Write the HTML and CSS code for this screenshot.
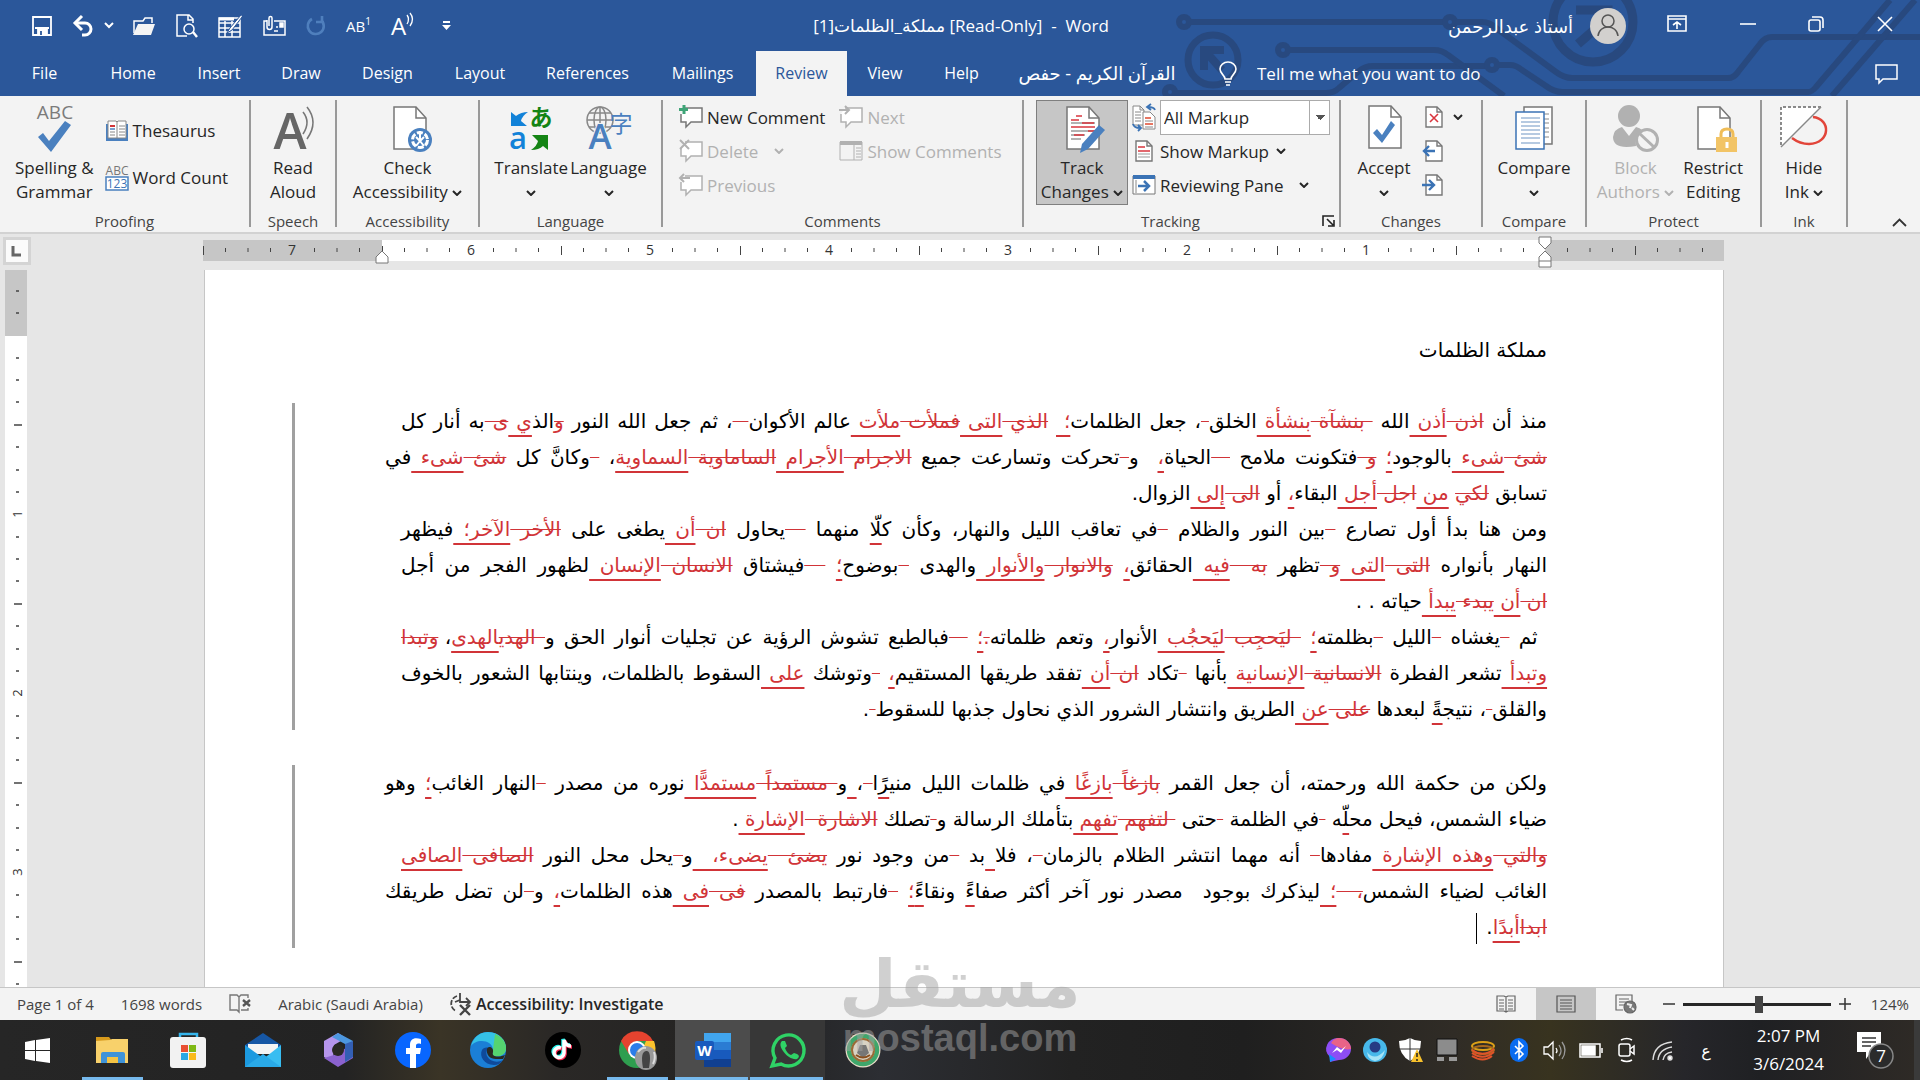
FILE: index.html
```
<!DOCTYPE html>
<html lang="en">
<head>
<meta charset="utf-8">
<title>Word</title>
<link rel="stylesheet" href="styles.css">
</head>
<body>
<svg class="defs" aria-hidden="true">
	<symbol id="chev" viewBox="0 0 10 6"><path d="M1 1l4 4 4-4" fill="none" stroke="currentColor" stroke-width="2"/></symbol>
	<symbol id="doc" viewBox="0 0 34 44"><path d="M1 1h22l10 11v31H1z" fill="#fff" stroke="#777" stroke-width="1.5"/><path d="M23 1v11h10" fill="none" stroke="#777" stroke-width="1.5"/></symbol>
	<symbol id="smalldoc" viewBox="0 0 18 22"><path d="M1 1h11l5 5v15H1z" fill="#fff" stroke="#777" stroke-width="1.4"/><path d="M12 1v5h5" fill="none" stroke="#777" stroke-width="1.4"/></symbol>
	<symbol id="bubble" viewBox="0 0 24 24"><path d="M6 3h17v14H12l-5 5v-5H2V9" fill="#fff" stroke="currentColor" stroke-width="1.5"/></symbol>
</svg>

<header class="top">
	<svg class="circuit" viewBox="0 0 760 96" fill="none" stroke="#28497f" stroke-width="6">
		<circle cx="24" cy="22" r="5"/><path d="M30 22h254"/><circle cx="290" cy="22" r="5"/>
		<path d="M296 22h26q8 0 14 6l60 44q8 6 16 6h156q6 0 10-6l22-28q5-7 12-7h150"/>
		<circle cx="53" cy="60" r="25" stroke-width="7"/><path d="M44 70V50h20M46 52l16 18" stroke-width="8"/>
		<circle cx="10" cy="92" r="5"/><path d="M16 93h150q8 0 13-5l20-17q6-5 14-5h113"/><circle cx="332" cy="65" r="5"/>
		<path d="M338 65h12q6 0 12 5l24 16q8 6 16 6h246q4 0 8-5L730 0"/>
		<circle cx="123" cy="50" r="5"/><path d="M129 50h145q8 0 14 5l56 41M672 96L755 0"/>
		<circle cx="433" cy="22" r="40" stroke-width="9"/><path d="M416 10h32v8L418 44" stroke-width="9"/>
	</svg>
	<div class="titlebar">
		<div class="quick">
			<button title="Save"><svg width="20" height="20" viewBox="0 0 20 20" fill="none" stroke="#fff" stroke-width="1.8"><path d="M1 1h18v18H1zM3 12h14"/><path d="M6 14h9v5H6z" fill="#fff"/><path d="M9 15v4" stroke="#2b579a"/></svg></button>
			<button title="Undo"><svg width="42" height="22" viewBox="0 0 42 22" fill="none" stroke="#fff"><path d="M3 8h10a6 6 0 0 1 0 12h-3" stroke-width="3"/><path d="M10 1L3 8l7 7" stroke-width="3"/><path d="M33 8l4 4 4-4" stroke-width="2"/></svg></button>
			<button title="Open"><svg width="24" height="20" viewBox="0 0 24 20"><path d="M2 17V5h9l2-3h7v5" fill="none" stroke="#fff" stroke-width="1.5"/><path d="M6 8h17l-4 11H1z" fill="#f4f4f4"/></svg></button>
			<button title="Print preview"><svg width="22" height="24" viewBox="0 0 22 24" fill="none" stroke="#fff" stroke-width="1.5"><path d="M17 9V5l-4-4H1v21h10M12 1v5h5"/><circle cx="13" cy="15" r="5"/><path d="M17 18l4 5" stroke-width="2.4"/></svg></button>
			<button title="Draw table"><svg width="25" height="24" viewBox="0 0 25 24" fill="none" stroke="#fff" stroke-width="1.5"><path d="M1 4h21v19H1zM1 9h21M1 14h21M1 18h21M7 7v16M14 7v16"/><path d="M1 5h15" stroke-width="3"/><path d="M23 1L12 14l-3 5 5-3L24 3" fill="#fff" stroke="#2b579a" stroke-width="1"/></svg></button>
			<button title="Email"><svg width="23" height="20" viewBox="0 0 23 20" fill="none" stroke="#fff" stroke-width="1.5"><path d="M4 5H1v14h21V5H11M11 15h4M13 11h2"/><path d="M17 7h3v4h-3z" fill="#fff"/><path d="M4 4v7a2 2 0 0 0 5 0V2a1.5 1.5 0 0 0-3 0v8"/></svg></button>
			<button title="Repeat" disabled><svg width="20" height="22" viewBox="0 0 20 22" fill="none" stroke="#4f7fbd" stroke-width="2.6"><path d="M6 4a8 8 0 1 0 9 1M10 7h8M16 1v7"/></svg></button>
			<button title="Footnote" class="qtext">AB<sup>1</sup></button>
			<button title="Read aloud" class="qbig">A<svg width="10" height="20" viewBox="0 0 10 20" fill="none" stroke="#fff" stroke-width="1.3"><path d="M1 3q3 4 0 9M4 1q5 6 0 13"/></svg></button>
			<button title="Customize"><svg width="9" height="10" viewBox="0 0 9 10" fill="#fff"><path d="M1 0h7v2H1zM0 4h9L4.5 9z"/></svg></button>
		</div>
		<div class="doctitle">مملكة_الظلمات[1] [Read-Only]&nbsp; -&nbsp; Word</div>
		<div class="account"><span>أستاذ عبدالرحمن</span>
			<svg width="36" height="36" viewBox="0 0 36 36"><circle cx="18" cy="18" r="18" fill="#d2d0ce"/><g fill="none" stroke="#555" stroke-width="1.5"><circle cx="18" cy="13" r="6"/><path d="M8 28c1-12 19-12 20 0"/></g></svg>
		</div>
		<div class="winbtns">
			<button title="Ribbon display"><svg width="20" height="17" viewBox="0 0 20 17" fill="none" stroke="#fff" stroke-width="1.6"><path d="M1 1h18v15H1zM1 4h18M10 14V7M6 10l4-3 4 3"/></svg></button>
			<button title="Minimize"><svg width="16" height="16" viewBox="0 0 16 16" stroke="#fff" stroke-width="1.6"><path d="M0 8h16"/></svg></button>
			<button title="Restore"><svg width="16" height="16" viewBox="0 0 16 16" fill="none" stroke="#fff" stroke-width="1.6"><rect x="1" y="4" width="11" height="11" rx="2"/><path d="M4 1h8a3 3 0 0 1 3 3v8"/></svg></button>
			<button title="Close"><svg width="16" height="16" viewBox="0 0 16 16" stroke="#fff" stroke-width="1.6"><path d="M1 1l14 14M15 1L1 15"/></svg></button>
		</div>
	</div>
	<div class="tabrow">
		<nav class="tabs">
			<a href="#">File</a><a href="#">Home</a><a href="#">Insert</a><a href="#">Draw</a><a href="#">Design</a><a href="#">Layout</a><a href="#">References</a><a href="#">Mailings</a><a href="#" class="active">Review</a><a href="#">View</a><a href="#">Help</a><a href="#" lang="ar">القرآن الكريم - حفص</a>
		</nav>
		<label class="tellme">
			<svg width="18" height="24" viewBox="0 0 18 24" fill="none" stroke="#fff" stroke-width="1.6"><path d="M6 17c0-4-5-5-5-10a8 7 0 0 1 16 0c0 5-5 6-5 10zM6 20h6M7 23h4"/></svg>
			<input type="text" placeholder="Tell me what you want to do">
		</label>
		<button title="Comments" class="commentbtn"><svg width="23" height="20" viewBox="0 0 23 20" fill="none" stroke="#fff" stroke-width="1.5"><path d="M1 1h21v14H8l-4 4v-4H1z"/></svg></button>
	</div>
</header>

<section class="ribbon">
	<div class="group proofing">
		<div class="tools">
			<button class="big">
				<svg width="48" height="48" viewBox="0 0 48 48"><text x="25" y="14" text-anchor="middle" font-size="19" fill="#7b7b7b">ABC</text><path d="M8 32l5-4 6 8L35 16l6 4-20 27z" fill="#4a80bf"/></svg>
				<span>Spelling &amp;<br>Grammar</span></button>
			<div class="stack two">
				<button><svg width="24" height="22" viewBox="0 0 24 22"><path d="M1 4h22v17H1z" fill="#4a80bf"/><path d="M3 1h8l1 1 1-1h8v17H3z" fill="#fff" stroke="#888"/><path d="M12 2v16M14 6h6M14 9h6M14 12h6M14 15h6M5 12h5M5 15h5" stroke="#888"/><path d="M5 6h5" stroke="#d13438" stroke-width="2"/><path d="M5 9h5" stroke="#4a80bf" stroke-width="1.5"/></svg>Thesaurus</button>
				<button><svg width="24" height="26" viewBox="0 0 24 26"><text x="12" y="10" text-anchor="middle" font-size="12" fill="#777">ABC</text><path d="M1 12h22v13H1z" fill="#fff" stroke="#4a80bf" stroke-width="1.5"/><text x="12" y="23" text-anchor="middle" font-size="12" fill="#3b73b5">123</text></svg>Word Count</button>
			</div>
		</div>
		<h2>Proofing</h2>
	</div>
	<div class="group">
		<div class="tools">
			<button class="big">
				<svg width="48" height="48" viewBox="0 0 48 48"><text x="21" y="44" text-anchor="middle" font-size="50" font-weight="600" fill="#666">A</text><path d="M34 7q8 10 0 22M38 2q12 15 0 32" fill="none" stroke="#777" stroke-width="1.6"/></svg>
				<span>Read<br>Aloud</span></button>
		</div>
		<h2>Speech</h2>
	</div>
	<div class="group">
		<div class="tools">
			<button class="big">
				<svg width="48" height="48" viewBox="0 0 48 48"><use href="#doc" x="9" y="1" width="34" height="44"/><circle cx="36" cy="35" r="12" fill="#4a80bf"/><circle cx="36" cy="35" r="7.5" fill="none" stroke="#fff" stroke-width="3" stroke-dasharray="6 2"/><path d="M36 26v9M32 32l4 4 4-4M32 41l4-5 4 5" fill="none" stroke="#fff" stroke-width="2"/></svg>
				<span>Check<br>Accessibility <svg class="chev"><use href="#chev"/></svg></span></button>
		</div>
		<h2>Accessibility</h2>
	</div>
	<div class="group">
		<div class="tools">
			<button class="big">
				<svg width="48" height="48" viewBox="0 0 48 48"><path d="M4 7l5 4q5-4 12-4-6 4-7 9l6 5H4z" fill="#1282d8"/><text x="34" y="21" text-anchor="middle" font-size="23" font-weight="700" class="cjk" fill="#148414">あ</text><text x="11" y="44" text-anchor="middle" font-size="31" font-weight="600" fill="#1282d8">a</text><path d="M25 30h16v15l-5-4q-4 4-12 4 6-4 7-9z" fill="#148414"/></svg>
				<span>Translate<br><svg class="chev"><use href="#chev"/></svg></span></button>
			<button class="big">
				<svg width="48" height="48" viewBox="0 0 48 48"><g fill="none" stroke="#888" stroke-width="1.5"><circle cx="15" cy="15" r="13"/><ellipse cx="15" cy="15" rx="6" ry="13"/><path d="M2 15h26M4 8h22M4 22h22M15 2v26"/></g><text x="15" y="44" text-anchor="middle" font-size="35" font-weight="600" fill="#4a80bf" stroke="#f3f3f3" stroke-width="2" paint-order="stroke">A</text><text x="36" y="27" text-anchor="middle" font-size="23" class="cjk" fill="#4a80bf">字</text></svg>
				<span>Language<br><svg class="chev"><use href="#chev"/></svg></span></button>
		</div>
		<h2>Language</h2>
	</div>
	<div class="group comments">
		<div class="tools">
			<div class="stack">
				<button><svg width="24" height="24" viewBox="0 0 24 24" class="grey"><use href="#bubble"/><path d="M5 0v9M0 4.500h9" stroke="#3fa477" stroke-width="3"/></svg>New Comment</button>
				<button disabled><svg width="24" height="24" viewBox="0 0 24 24"><use href="#bubble"/><path d="M1 1l9 9M10 1L1 10" stroke="#b1b1b1" stroke-width="2"/></svg>Delete &nbsp;<svg class="chev"><use href="#chev"/></svg></button>
				<button disabled><svg width="24" height="24" viewBox="0 0 24 24"><use href="#bubble"/><path d="M1 5h10M5 1L1 5l4 4" fill="none" stroke="#b1b1b1" stroke-width="2"/></svg>Previous</button>
			</div>
			<div class="stack">
				<button disabled><svg width="24" height="24" viewBox="0 0 24 24"><use href="#bubble"/><path d="M0 5h10M6 1l4 4-4 4" fill="none" stroke="#b1b1b1" stroke-width="2"/></svg>Next</button>
				<button disabled><svg width="24" height="24" viewBox="0 0 24 24" fill="none" stroke="#b1b1b1"><path d="M1 3h22v18H1zM15 5v16M17 9h5M17 12h5M17 15h5M17 18h5"/><path d="M1 4h22" stroke-width="4"/></svg>Show Comments</button>
			</div>
		</div>
		<h2>Comments</h2>
	</div>
	<div class="group tracking">
		<div class="tools">
			<button class="big on">
				<svg width="48" height="48" viewBox="0 0 48 48"><use href="#doc" x="8" y="1" width="34" height="44"/><path d="M13 18h24M13 26h24M13 30h14M13 34h10" stroke="#999" stroke-width="1.3"/><path d="M18 11h6M13 15h8M24 18h12M13 22h24M30 26h7M16 30h10" stroke="#d9363e" stroke-width="1.6"/><path d="M41 20l6 5-17 19-8 4 2-9z" fill="#4a80bf"/></svg>
				<span>Track<br>Changes <svg class="chev"><use href="#chev"/></svg></span></button>
			<div class="stack">
				<label><svg width="24" height="26" viewBox="0 0 24 26" fill="#fff" stroke="#888"><path d="M1 2h7l4 4v15H1zM8 2v4h4M3 8h6M3 11h6M3 14h6M3 17h6"/><path d="M11 8h7l5 5v12H11z"/><path d="M13 14h6M13 20h8" stroke="#e04a2f" stroke-width="1.6"/><path d="M13 17h8M13 23h8"/><path d="M23 6q-1-3-7-3M19 0l-4 3 4 3M1 20q1 4 7 4M6 21l3 3-3 3" fill="none" stroke="#3b73b5" stroke-width="1.8"/></svg><select title="Display for Review"><option>All Markup</option></select></label>
				<button><svg width="24" height="24" viewBox="0 0 24 24"><use href="#smalldoc" x="3" y="1" width="18" height="22"/><path d="M6 8h7M6 12h12" stroke="#d9363e" stroke-width="1.5"/><path d="M6 15h12M6 18h12" stroke="#999"/></svg>Show Markup <svg class="chev"><use href="#chev"/></svg></button>
				<button><svg width="24" height="24" viewBox="0 0 24 24"><path d="M1 3h22v18H1z" fill="#fff" stroke="#777"/><path d="M1 4h22" stroke="#3b73b5" stroke-width="4"/><path d="M4 7v13" stroke="#888"/><path d="M6 13h11M12 8l5 5-5 5" fill="none" stroke="#3b73b5" stroke-width="2.5"/></svg>Reviewing Pane &nbsp;<svg class="chev"><use href="#chev"/></svg></button>
			</div>
		</div>
		<h2>Tracking</h2>
		<button class="launcher" title="Change Tracking Options"><svg width="13" height="12" viewBox="0 0 13 12" fill="none" stroke="#222" stroke-width="1.6"><path d="M1 11V1h11M5 4l6 6M12 5v6H6"/></svg></button>
	</div>
	<div class="group changes">
		<div class="tools">
			<button class="big">
				<svg width="48" height="48" viewBox="0 0 48 48"><use href="#doc" x="8" y="0" width="34" height="44"/><path d="M13 28l4-4 5 6 9-14 4 4-13 18z" fill="#4a80bf"/></svg>
				<span>Accept<br><svg class="chev"><use href="#chev"/></svg></span></button>
			<div class="stack">
				<button title="Reject"><svg width="24" height="24" viewBox="0 0 24 24"><use href="#smalldoc" x="3" y="1" width="18" height="22"/><path d="M8 9l8 8M16 9l-8 8" stroke="#d9363e" stroke-width="1.6"/></svg><svg class="chev"><use href="#chev"/></svg></button>
				<button title="Previous change"><svg width="24" height="24" viewBox="0 0 24 24"><use href="#smalldoc" x="3" y="1" width="18" height="22"/><path d="M2 12h11M7 7l-5 5 5 5" fill="none" stroke="#3b73b5" stroke-width="2.4"/></svg></button>
				<button title="Next change"><svg width="24" height="24" viewBox="0 0 24 24"><use href="#smalldoc" x="3" y="1" width="18" height="22"/><path d="M0 12h11M7 7l5 5-5 5" fill="none" stroke="#3b73b5" stroke-width="2.4"/></svg></button>
			</div>
		</div>
		<h2>Changes</h2>
	</div>
	<div class="group">
		<div class="tools">
			<button class="big">
				<svg width="48" height="48" viewBox="0 0 48 48"><path d="M14 2h28v37H14z" fill="#fff" stroke="#777" stroke-width="1.5"/><path d="M34 9h5M34 14h5M34 18h5M34 23h5M34 27h5M34 32h5" stroke="#888"/><path d="M6 7h28v37H6z" fill="#fff" stroke="#3b73b5" stroke-width="1.5"/><path d="M11 13h19M11 17h19M11 21h19M11 25h19M11 29h19M11 33h19M11 38h19" stroke="#6f96c4" stroke-width="1.2"/></svg>
				<span>Compare<br><svg class="chev"><use href="#chev"/></svg></span></button>
		</div>
		<h2>Compare</h2>
	</div>
	<div class="group">
		<div class="tools">
			<button class="big" disabled>
				<svg width="48" height="48" viewBox="0 0 48 48"><ellipse cx="18" cy="11" rx="11" ry="11" fill="#b1b1b1"/><path d="M2 32q1-8 9-10l7 9 7-9q4 1 6 3-8 6-6 16Q2 45 2 32z" fill="#b1b1b1"/><circle cx="36" cy="35" r="10.5" fill="#f3f3f3" stroke="#b1b1b1" stroke-width="3"/><path d="M28 28l15 14" stroke="#b1b1b1" stroke-width="3"/></svg>
				<span>Block<br>Authors <svg class="chev"><use href="#chev"/></svg></span></button>
			<button class="big">
				<svg width="48" height="48" viewBox="0 0 48 48"><use href="#doc" x="8" y="1" width="34" height="44"/><path d="M32 34v-5q0-5 6-5t6 5v5" fill="none" stroke="#f0bd57" stroke-width="3"/><path d="M27 32h21v15H27z" fill="#f2c466"/><path d="M38 37v6" stroke="#fff" stroke-width="3"/></svg>
				<span>Restrict<br>Editing</span></button>
		</div>
		<h2>Protect</h2>
	</div>
	<div class="group">
		<div class="tools">
			<button class="big">
				<svg width="48" height="48" viewBox="0 0 48 48" fill="none"><path d="M33 12c18 2 18 26-4 27-8 0-13-3-17-6" stroke="#e2453a" stroke-width="2.5"/><path d="M1 2h40L1 42z" fill="#fff"/><path d="M41 2H1v40" stroke="#666" stroke-width="1.5" stroke-dasharray="3 2"/><path d="M41 2L1 42" stroke="#888" stroke-width="1.5"/></svg>
				<span>Hide<br>Ink <svg class="chev"><use href="#chev"/></svg></span></button>
		</div>
		<h2>Ink</h2>
	</div>
	<button class="collapse" title="Collapse the Ribbon"><svg width="15" height="9" viewBox="0 0 15 9" fill="none" stroke="#333" stroke-width="1.8"><path d="M1 8l6.500-6.500L14 8"/></svg></button>
</section>

<main class="work">
	<div class="hrow">
		<div class="tabsel"><svg width="10" height="11" viewBox="0 0 10 11"><path d="M1 0v9h8" fill="none" stroke="#666" stroke-width="3"/></svg></div>
		<svg class="hruler" viewBox="0 0 1521 28" preserveAspectRatio="xMaxYMid meet">
			<defs><pattern id="ticks" x="0" y="0" width="179" height="22" patternUnits="userSpaceOnUse"><path d="M.5 7v9M22.500 9v4M45 9v4M67.500 9v4M111.500 9v4M134 9v4M156.500 9v4" stroke="#444"/></pattern></defs>
			<path d="M0 1h179v21H0zM1342 1h179v21h-179z" fill="#c6c6c6"/>
			<path d="M179 1h1163v21H179z" fill="#fff"/>
			<path d="M0 0h1521v22H0z" fill="url(#ticks)"/>
			<g font-size="14" fill="#333" text-anchor="middle"><text x="89" y="16">7</text><text x="268" y="16">6</text><text x="447" y="16">5</text><text x="626" y="16">4</text><text x="805" y="16">3</text><text x="984" y="16">2</text><text x="1163" y="16">1</text></g>
			<g fill="#fff" stroke="#777"><path d="M173 24v-6l6-6 6 6v6zM1336-2h12v6l-6 6-6-6zM1336 24v-6l6-6 6 6v10h-12zM1336 22h12"/></g>
		</svg>
	</div>
	<div class="canvas">
		<svg class="vruler" width="22" height="718" viewBox="0 0 22 718">
			<path d="M0 0h22v66H0z" fill="#c6c6c6"/><path d="M0 66h22v652H0z" fill="#fff"/>
			<path d="M11 21h3M11 43h3M11 88h3M11 110h3M11 132h3M9 155h8M11 177h3M11 200h3M11 222h3M11 267h3M11 289h3M11 311h3M9 334h8M11 356h3M11 379h3M11 401h3M11 446h3M11 468h3M11 490h3M9 513h8M11 535h3M11 558h3M11 580h3M11 625h3M11 647h3M11 669h3M9 692h8M11 714h3" stroke="#444" stroke-width="1.5"/>
			<g font-size="13" fill="#333" text-anchor="middle"><text transform="translate(17 244) rotate(-90)">1</text><text transform="translate(17 423) rotate(-90)">2</text><text transform="translate(17 602) rotate(-90)">3</text></g>
		</svg>
		<article class="page" dir="rtl" lang="ar">
			<h1>مملكة الظلمات</h1>
			<div class="changed">
				<p class="full">منذ أن <del>اذن </del><ins>أذن </ins>الله <del> بنشآة </del><ins>بنشأة </ins>الخلق<del> </del>، جعل الظلمات<ins>؛ </ins> <del>الذي </del><ins>التى </ins><del>فملأت </del><ins>ملأت </ins>عالم الأكوان<del>  </del>، ثم جعل الله النور <del>و</del>الذ<ins>ي </ins><del>ى </del>به أنار كل</p>
				<p class="full wide"><del>شئ </del><ins>شىء </ins>بالوجود<ins>؛</ins> <del>و </del>فتكونت ملامح <del>  </del>الحياة<ins>،</ins>  و<del> </del>تحركت وتسارعت جميع <del>الاجرام </del><ins>الأجرام </ins><del>الساماوية </del><ins>السماوية</ins>، <del> </del>وكانَّ كل <del>شئ </del><ins>شىء </ins>في</p>
				<p>تسابق <del>لكي</del> <ins>من </ins><del>اجل </del><ins>أجل </ins>البقاء<ins>،</ins> أو <del>الى </del><ins>إلى </ins>الزوال.</p>
				<p class="full">ومن هنا بدأ أول تصارع <del> </del>بين النور والظلام <del> </del>في تعاقب الليل والنهار، وكأن ك<ins class="mark">لّا</ins> منهما <del>  </del>يحاول <del>ان </del><ins>أن </ins>يطغى على <del>الأخر </del><ins>الآخر؛ </ins>فيظهر</p>
				<p class="full">النهار بأنواره <del>التى </del><ins>التى </ins><del>و </del>تظهر <del>به  </del><ins>فيه </ins>الحقائق<ins>،</ins> <del>والانوار </del><ins>والأنوار </ins>والهدى <del> </del>بوضوح<ins>؛</ins> <del>  </del>فيشتاق <del>الانسان </del><ins>الإنسان </ins>لظهور الفجر من أجل</p>
				<p><del>ان </del><ins>أن </ins><del>يبدء </del><ins>يبدأ </ins>حياته . .</p>
				<p class="full"> ثم <del> </del>يغشاه <del> </del>الليل <del> </del>بظلمته<ins>؛</ins> <del> ليَحجِب </del><ins>ليَحجُب </ins>الأنوار<ins>،</ins> وتعم ظلماته<del>.</del><ins>؛</ins> <del>  </del>فبالطبع تشوش الرؤية عن تجليات أنوار الحق و<del> الهدي</del><ins>الهدى</ins>، <del>وتبدا</del></p>
				<p class="full"><ins>وتبدأ </ins>تشعر الفطرة <del>الانسانية </del><ins>الإنسانية </ins>بأنها <del> </del>تكاد <del>ان </del><ins>أن </ins>تفقد طريقها المستقيم<ins>،</ins> <del> </del>وتوشك <ins>على </ins>السقوط بالظلمات، وينتابها الشعور بالخوف</p>
				<p>والقلق<del> </del>، نتيج<ins class="mark">ةً</ins> لبعدها <del>على </del><ins>عن </ins>الطريق وانتشار الشرور الذي نحاول جذبها للسقوط<del> </del>.</p>
			</div>
			<div class="changed">
				<p class="full wide">ولكن من حكمة الله ورحمته، أن جعل القمر <del>بازغاً </del><ins>بازغًا </ins>في ظلمات الليل مني<ins class="mark">رً</ins>ا<del> </del>،<ins> </ins>و<del> مستمداً </del><ins>مستمدًّا </ins>نوره من مصدر <del> </del>النهار الغائب<ins>؛</ins> وهو</p>
				<p>ضياء الشمس، فيحل مح<ins class="mark">لّ</ins>ه <del> </del>في الظلمة <del> </del>حتى <del> لتفهم </del><ins>تفهم </ins>بتأملك الرسالة و<del> </del>تصلك <del>الاشارة  </del><ins>الإشارة </ins>.</p>
				<p class="full"><del>والتي </del><ins>وهذه الإشارة </ins>مفادها<del> </del> أنه مهما انتشر الظلام بالزمان<del> </del>، فلا<ins> </ins>بد <del> </del>من وجود نور <del>يضئ  </del><ins>يضىء،  </ins>و<del> </del>يحل محل النور <del>الصافى </del><ins>الصافى</ins></p>
				<p class="full wide">الغائب لضياء الشمس<del>،  </del><ins>؛ </ins>ليذكرك بوجود  مصدر نور آخر أكثر صفا<ins class="mark">ءً</ins> ونقا<ins class="mark">ءً</ins><ins>؛</ins> <del> </del>فارتبط بالمصدر <del>فى </del><ins>فى </ins>هذه الظلمات<ins>،</ins> و<del> </del>لن تضل طريقك</p>
				<p><del>ابدا</del><ins>أبدًا</ins>. <i class="cursor"></i></p>
			</div>
		</article>
	</div>
</main>

<footer class="status">
	<span>Page 1 of 4</span><span>1698 words</span>
	<svg width="22" height="20" viewBox="0 0 22 20" fill="none" stroke="#777" stroke-width="1.4"><path d="M10 3v15l-2-2H1V1h7l2 2 2-2h7v3M12 16h7v-2"/><path d="M14 6l7 6M21 6l-7 6" stroke="#555" stroke-width="2.4"/></svg>
	<span>Arabic (Saudi Arabia)</span>
	<b><svg width="22" height="22" viewBox="0 0 22 22" fill="none" stroke="#444" stroke-width="1.8"><path d="M7 3a8 8 0 0 0-1 15" stroke-dasharray="5 1.5"/><path d="M10 0v9h9M16 5l4 4-4 4M5 9l5-2"/><path d="M10 12l10 10M20 12L10 22" stroke-width="2.4"/></svg>Accessibility: Investigate</b>
	<div class="views">
		<button title="Read Mode"><svg width="20" height="18" viewBox="0 0 20 18" fill="none" stroke="#666" stroke-width="1.2"><path d="M1 1h7l2 1 2-1h7v15h-7l-2 1-2-1H1zM10 2v15M3 5h5M3 8h5M3 11h5M3 14h5M12 5h5M12 8h5M12 11h5M12 14h5"/></svg></button>
		<button title="Print Layout" class="on"><svg width="20" height="18" viewBox="0 0 20 18" fill="none" stroke="#555" stroke-width="1.2"><path d="M1 1h18v16H1zM4 5h12M4 8h12M4 11h12M4 14h12"/></svg></button>
		<button title="Web Layout"><svg width="22" height="20" viewBox="0 0 22 20" fill="none" stroke="#666" stroke-width="1.2"><path d="M8 16H1V1h16v6M4 5h10M4 8h8M4 11h5"/><circle cx="15" cy="13" r="6" fill="#777"/><path d="M12 10l4 1-1 3M17 14l2 2" stroke="#eee" stroke-width="2"/></svg></button>
	</div>
	<div class="zoom">
		<button title="Zoom Out"><svg width="12" height="12" viewBox="0 0 12 12" stroke="#333" stroke-width="1.5"><path d="M0 6h12"/></svg></button>
		<input type="range" min="10" max="238" value="127" aria-label="Zoom">
		<button title="Zoom In"><svg width="12" height="12" viewBox="0 0 12 12" stroke="#333" stroke-width="1.5"><path d="M0 6h12M6 0v12"/></svg></button>
		<span>124%</span>
	</div>
</footer>

<div class="taskbar">
	<div class="apps">
		<button title="Start"><svg width="25" height="25" viewBox="0 0 25 25" fill="#fff"><path d="M0 4l10-2v10H0zM11 2l14-2v12H11zM0 13h10v10L0 21zM11 13h14v12l-14-2z"/></svg></button>
		<button title="File Explorer" class="run"><svg width="36" height="36" viewBox="0 0 36 36"><path d="M1 5h13l3 4H1z" fill="#d79a1c"/><path d="M1 9l14-1 2-1h16v24H1z" fill="#f8d16b"/><path d="M6 31V22q0-2 2-2h20q2 0 2 2v9h-7v-6H12v6z" fill="#3f93d9"/><path d="M12 25h11v6H12z" fill="#f5c445"/></svg></button>
		<button title="Microsoft Store"><svg width="36" height="36" viewBox="0 0 36 36"><path d="M10 6V2h17v4" fill="none" stroke="#35b5ec" stroke-width="2.5"/><rect y="5" width="36" height="31" rx="3" fill="#f2f2f2"/><path d="M11 13h7v7h-7z" fill="#e94f32"/><path d="M19 13h7v7h-7z" fill="#7fb915"/><path d="M11 21h7v7h-7z" fill="#2aa7e4"/><path d="M19 21h7v7h-7z" fill="#f9bb1b"/></svg></button>
		<button title="Mail"><svg width="36" height="36" viewBox="0 0 36 36"><path d="M0 13L18 1l18 12v6H0z" fill="#1657a5"/><path d="M3 12h30v10H3z" fill="#f4f4f4"/><path d="M0 13l18 13v9H0z" fill="#1c9ae0"/><path d="M36 13L8 35h28z" fill="#38bdf1"/><path d="M0 35h36L18 22z" fill="#2aaae8"/></svg></button>
		<button title="Microsoft 365"><svg width="34" height="36" viewBox="0 0 34 36"><path d="M17 1L3 9v16l9 5 1-17 12-7z" fill="#b695ec"/><path d="M17 1l15 8v14l-8-3V12l-13-7z" fill="#4c97e0"/><path d="M32 14v12L17 35 3 26l10-3 12-7z" fill="#8b62cf"/><path d="M24 12l8-3v16l-8 5z" fill="#335fb4"/><circle cx="17" cy="18" r="6" fill="#2a2823"/></svg></button>
		<button title="Facebook"><svg width="36" height="36" viewBox="0 0 36 36"><circle cx="18" cy="18" r="18" fill="#0866ff"/><path d="M15 36V22h-4v-6h4v-3c0-6 4-8 11-6v5c-4-1-5 0-5 2v2h5l-1 6h-4v14z" fill="#fff"/></svg></button>
		<button title="Edge"><svg width="36" height="36" viewBox="0 0 36 36"><circle cx="18" cy="18" r="18" fill="#1b7fd6"/><path d="M1 14C4 3 12 0 18 0c12 0 18 9 18 16 0 8-8 9-12 8-3-1-1-3-1-6 0-6-6-9-11-9S3 11 1 14z" fill="#35c1e6"/><path d="M25 2c8 3 11 9 11 14 0 8-8 9-12 8-3-1-1-3-1-6z" fill="#55d470"/><path d="M12 18c-3 6 2 15 12 15 4 0 7-2 9-5-5 3-13 2-16-4-1-3-1-6 2-8-3-1-6 0-7 2z" fill="#0f4a9b"/><path d="M17 17c-1 6 3 10 9 10h7l2-4c-4 2-14 3-12-3 1-4-4-7-6-3z" fill="#2a2a22"/></svg></button>
		<button title="TikTok"><svg width="36" height="36" viewBox="0 0 36 36"><circle cx="18" cy="18" r="18" fill="#000"/><g fill="none" stroke-width="3.5"><path d="M16 16a5 5 0 1 0 3 5V8c1 4 4 6 7 6" stroke="#25f4ee" transform="translate(-1 -1)"/><path d="M16 16a5 5 0 1 0 3 5V8c1 4 4 6 7 6" stroke="#fe2c55" transform="translate(1 1)"/><path d="M16 16a5 5 0 1 0 3 5V8c1 4 4 6 7 6" stroke="#fff"/></g></svg></button>
		<button title="Chrome" class="run"><svg width="40" height="40" viewBox="0 0 40 40"><circle cx="19" cy="20" r="18" fill="#2f9e4f"/><path d="M3 11a18 18 0 0 1 32 0H19l-8 13z" fill="#e5432f"/><path d="M36 11q5 14-7 24l-9-6 8-18z" fill="#fbc22d"/><circle cx="19" cy="20" r="9" fill="#fff"/><circle cx="19" cy="20" r="7" fill="#2b7de9"/><ellipse cx="28" cy="28" rx="11" ry="12" fill="#999"/><path d="M25 38q-3-16 3-17t3 17z" fill="#444"/><path d="M20 22q4-5 8-4M36 22q2 6-1 12" stroke="#ddd" stroke-width="2" fill="none"/></svg></button>
		<button title="Word" class="run current"><svg width="36" height="36" viewBox="0 0 36 36"><path d="M9 1h27v9H9z" fill="#41a5ee"/><path d="M9 10h27v8H9z" fill="#2b7cd3"/><path d="M9 18h27v9H9z" fill="#185abd"/><path d="M9 27h27v8H9z" fill="#103f91"/><rect y="9" width="19" height="19" rx="2" fill="#185abd"/><text x="9.500" y="24" font-size="15" font-weight="700" fill="#fff" text-anchor="middle">W</text></svg></button>
		<button title="WhatsApp" class="run lit"><svg width="36" height="36" viewBox="0 0 36 36"><path d="M2 34l3-8a15.500 15.500 0 1 1 6 6z" fill="none" stroke="#2fd366" stroke-width="3.4"/><path d="M12 9c-6 5 7 20 15 18 3-2 2-4 0-5l-3-1-3 2c-3-1-5-4-6-7l2-2-2-5z" fill="#2fd366"/></svg></button>
		<button title="Emblem"><svg width="36" height="36" viewBox="0 0 36 36"><circle cx="18" cy="18" r="17.5" fill="#e9ddc8"/><circle cx="18" cy="18" r="14" fill="none" stroke="#3fa66b" stroke-width="4.5"/><circle cx="18" cy="18" r="11" fill="#d8d2c4" stroke="#9a6a35" stroke-width="2"/><path d="M12 21l3-8h6l3 8-6 5z" fill="#777"/><path d="M11 23q7 5 14 0" fill="none" stroke="#8a4f1e" stroke-width="2"/></svg></button>
	</div>
	<div class="tray">
		<svg viewBox="0 0 24 24"><path d="M12 0a12 11 0 0 1 0 22l-5 1-4 1v-5A12 11 0 0 1 12 0z" fill="#8d4df5"/><path d="M12 0a12 11 0 0 1 12 11q-8 2-20-6 3-5 8-5z" fill="#e96387"/><path d="M2 16l1 8 6-3z" fill="#1a8cff"/><path d="M5 15l5-6 4 3 5-4-5 7-4-3z" fill="#fff"/></svg>
		<svg viewBox="0 0 24 24"><circle cx="12" cy="12" r="12" fill="#47b8ea"/><path d="M4 14q8 10 18-2-2 10-10 11-7-1-8-9z" fill="#a6e4f7"/><circle cx="12" cy="9" r="5.5" fill="#263b84"/></svg>
		<svg viewBox="0 0 24 24"><path d="M11 0q5 3 11 3 0 14-11 20Q0 17 0 3q6 0 11-3z" fill="#fff"/><path d="M11 0v23M0 11h22" stroke="#333"/><path d="M18 11l6 13H12z" fill="#f8c12c"/><path d="M18 15v4M18 21v2" stroke="#222" stroke-width="1.5"/></svg>
		<svg viewBox="0 0 24 24"><path d="M2 1h20v16H2z" fill="#8c8c8c" stroke="#111"/><path d="M2 19h7v4H2zM14 19h8v4h-8z" fill="#999"/></svg>
		<svg viewBox="0 0 24 24" fill="none" stroke-width="2"><ellipse cx="12" cy="8" rx="11" ry="4" stroke="#dba017"/><ellipse cx="12" cy="12" rx="11" ry="4" stroke="#a8691d"/><path d="M1 12q11 8 22-1M1 15q11 8 22-1M1 18q11 7 20 0" stroke="#e0532a"/></svg>
		<svg viewBox="0 0 24 24"><rect x="3" width="18" height="24" rx="9" fill="#0a6cf0"/><path d="M8 8l8 8-4 4V4l4 4-8 8" fill="none" stroke="#fff" stroke-width="1.6"/></svg>
		<svg viewBox="0 0 24 24" fill="none" stroke="#fff" stroke-width="1.3"><path d="M1 9h4l5-5v17l-5-5H1zM13 10q2 3 0 5"/><path d="M16 7q4 6 0 11M19 4q6 8 0 17" stroke="#999"/></svg>
		<svg viewBox="0 0 24 24" fill="none" stroke="#fff" stroke-width="1.5"><path d="M1 6h20v13H1zM23 10v5"/><path d="M3 8h13v9H3z" fill="#fff"/></svg>
		<svg viewBox="0 0 24 24" fill="none" stroke="#fff" stroke-width="1.5"><rect x="4" y="6" width="11" height="12" rx="2"/><path d="M15 11l4-3v8l-4-3M6 2q6-3 11 0M6 22q6 3 11 0"/></svg>
		<svg viewBox="0 0 24 24" fill="none" stroke="#ddd" stroke-width="1.4"><path d="M2 22Q3 6 21 4M7 22Q8 11 21 9M12 22q1-7 9-8"/><circle cx="19" cy="20" r="2" fill="#fff"/></svg>
		<span class="lang">ع</span>
		<time>2:07 PM<br>3/6/2024</time>
		<button title="Notifications"><svg width="38" height="38" viewBox="0 0 38 38"><path d="M1 1h24v20H15l-5 7v-7H1z" fill="#fff"/><path d="M6 7h14M6 11h14M6 15h9" stroke="#333" stroke-width="1.5"/><circle cx="25" cy="25" r="12" fill="#2b2b2b" stroke="#888" stroke-width="1.5"/><text x="25" y="31" font-size="17" fill="#fff" text-anchor="middle">7</text></svg></button>
	</div>
</div>

<div class="watermark"><span lang="ar">مستقل</span><span>mostaql.com</span></div>
</body>
</html>
```
FILE: styles.css
```
* { box-sizing: border-box; }
body {
	margin: 0;
	height: 100vh;
	display: flex;
	flex-direction: column;
	overflow: hidden;
	font-family: "Open Sans", "DejaVu Sans", sans-serif;
	font-size: 16px;
	color: #262626;
	background: #e6e6e6;
}
button, select, input { font: inherit; color: inherit; }
button { display: flex; align-items: center; border: 0; background: none; padding: 0; }
svg { flex: none; overflow: visible; }
a { color: inherit; text-decoration: none; }
.defs { position: absolute; width: 0; height: 0; }
.cjk { font-family: "Noto Sans CJK JP", sans-serif; }

/* title bar + tabs */
.top { position: relative; background: #2b579a; color: #fff; height: 96px; flex: none; overflow: hidden; }
.circuit { position: absolute; right: 0; top: 0; width: 760px; height: 96px; }
.titlebar { position: relative; display: grid; grid-template-columns: 460px 1fr 468px 294px; height: 51px; align-items: center; }
.quick { display: flex; align-items: center; gap: 20px; padding-left: 32px; }
.quick button { flex: none; }
.quick button:nth-child(2) { margin-right: -2px; }
.quick button:last-child { margin-left: 6px; }
.qtext { font-size: 15px; }
.qtext sup { font-size: 10px; line-height: 10px; margin-bottom: 10px; }
.qbig { font-size: 24px; line-height: 24px; }
.quick .qbig svg { margin-bottom: 8px; }
.doctitle { text-align: center; padding-left: 304px; white-space: nowrap; font-size: 17px; }
.account { display: flex; align-items: center; justify-content: flex-end; gap: 17px; height: 51px; font-size: 18px; }
.winbtns { display: flex; justify-content: space-between; padding: 0 27px 4px 41px; }
.tabrow { position: relative; display: flex; height: 45px; align-items: center; }
.tabs { display: grid; grid-template-columns: 89px 88px 84px 80px 93px 92px 123px 107px 91px 76px 77px 194px; height: 45px; line-height: 45px; text-align: center; }
.tabs a { white-space: nowrap; }
.tabs a:lang(ar) { font-size: 18px; }
.tabs .active { background: #f3f3f3; color: #2b579a; }
.tellme { display: flex; align-items: center; gap: 20px; padding-left: 25px; flex: 1; font-size: 17px; }
.tellme input { width: 300px; border: 0; padding: 0; background: none; outline: 0; }
.tellme input::placeholder { color: #fff; opacity: 1; }
.commentbtn { margin-right: 22px; }

/* ribbon */
.ribbon {
	display: grid;
	grid-template-columns: 251px 86px 143px 183px 361px 317px 142px 104px 175px 86px 1fr;
	flex: none;
	height: 138px;
	padding: 4px 0 5px;
	background: #f3f3f3;
	border-bottom: 2px solid #d2d2d2;
}
.group { position: relative; display: flex; flex-direction: column; justify-content: space-between; border-right: 2px solid #999; white-space: nowrap; font-size: 17px; }
.group h2 { margin: 0; font-size: 15px; line-height: 12px; font-weight: 400; text-align: center; color: #444; }
.tools { display: flex; justify-content: center; height: 105px; }
.big { flex-direction: column; height: 105px; padding: 4px 0 0; border: 1px solid transparent; gap: 3px; line-height: 24px; min-width: 76px; }
.big.on { background: #c6c6c6; border-color: #7f7f7f; }
.chev { width: 10px; height: 6px; vertical-align: middle; }
.stack { display: flex; flex-direction: column; }
.stack button, .stack label { display: flex; align-items: center; gap: 4px; height: 34px; }
.stack.two { justify-content: space-around; padding: 7px 0 4px; }
.stack .chev { margin-left: 3px; }
.grey { color: #777; }
button:disabled { color: #b1b1b1; }
.proofing .tools { justify-content: flex-start; gap: 10px; padding-left: 14px; }
.comments .tools { justify-content: flex-start; gap: 14px; padding-left: 16px; }
.changes .tools { justify-content: flex-start; padding-left: 5px; }
.tracking .tools { justify-content: flex-start; gap: 4px; padding-left: 12px; }
.tracking .big { width: 92px; }
.tracking h2 { padding-right: 22px; }
.stack select {
	width: 170px;
	height: 35px;
	padding: 0 0 0 3px;
	border: 1px solid #ababab;
	border-radius: 0;
	appearance: none;
	background: linear-gradient(#ababab, #ababab) right 19px top / 1px 100% no-repeat,
		linear-gradient(to top left, transparent 50%, #555 0) right 4px center / 5px 5px no-repeat,
		linear-gradient(to top right, transparent 50%, #555 0) right 9px center / 5px 5px no-repeat,
		#fff;
}
.launcher { position: absolute; right: 4px; bottom: 0; }
.collapse { align-self: end; justify-self: end; margin-right: 13px; }

/* rulers and page */
.work { flex: 1; min-height: 0; display: flex; flex-direction: column; overflow: hidden; }
.hrow { display: flex; justify-content: space-between; flex: none; height: 35px; padding: 3px 196px 0 3px; }
.tabsel { display: flex; align-items: center; justify-content: center; width: 28px; height: 28px; background: #fbfbfb; border: 3px solid #d4d4d4; }
.hruler { width: 1521px; height: 28px; margin-top: 2px; }
.canvas { flex: 1; min-height: 0; display: flex; padding: 1px 196px 0 5px; }
.page { flex: 1; margin-left: 177px; background: #fff; border: solid #c6c6c6; border-width: 0 1px; padding: 62px 176px 0 87px; }
.page h1, .page p {
	margin: 0;
	height: 36px;
	line-height: 36px;
	font-family: "DejaVu Sans", sans-serif;
	font-size: 20px;
	font-weight: 400;
	color: #000;
	white-space: pre-wrap;
}
.changed { margin-top: 35px; padding: 0 0 3px 106px; border-left: 3px solid #a0a0a0; }
.page .full { text-align: justify; text-align-last: justify; }
.page .wide { margin-left: -16px; }
.page del { color: #d13438; text-decoration: line-through 1px; }
.page ins { color: #d13438; text-decoration: underline 2px; text-underline-offset: 7px; text-decoration-skip-ink: none; }
.page .mark { color: #000; text-decoration-color: #d13438; }
.cursor { display: inline-block; width: 1px; height: 31px; margin-right: 3px; background: #000; vertical-align: middle; }

/* status bar */
.status { display: flex; align-items: center; flex: none; height: 33px; padding: 0 11px 0 17px; gap: 27px; background: #f3f3f3; border-top: 1px solid #c6c6c6; font-size: 15px; white-space: nowrap; color: #444; }
.status b { display: flex; align-items: center; gap: 4px; font-size: 16px; font-weight: 600; color: #262626; }
.views { display: flex; margin-left: auto; }
.views button { width: 60px; height: 32px; justify-content: center; }
.views .on { background: #c6c6c6; }
.zoom { display: flex; align-items: center; gap: 8px; margin-left: -20px; }
.zoom input { appearance: none; width: 148px; height: 3px; margin: 0; background: #262626; }
.zoom input::-webkit-slider-thumb { appearance: none; width: 8px; height: 17px; background: #444; }
.zoom span { margin-left: 12px; }

/* taskbar */
.taskbar { display: flex; justify-content: space-between; flex: none; height: 60px; background: linear-gradient(90deg, #262626 0, #232323 18%, #3a3426 23%, #2a2826 29%, #222 40%, #2c2e33 46%, #222 56%, #1f1f1f 65%, #302c26 76%, #38331f 81%, #26262a 88%, #1f2023 92%, #2e2a26); border-right: 6px solid #3a3a3a; }
.apps { display: flex; }
.apps button { width: 75px; justify-content: center; position: relative; }
.apps .run::after { content: ""; position: absolute; left: 7px; right: 7px; bottom: 0; height: 3px; background: #76b9ed; }
.apps .current { background: #4c4c4c; }
.apps .lit { background: #373737; }
.apps .current::after, .apps .lit::after { left: 0; right: 2px; }
.tray { display: flex; align-items: center; gap: 12px; color: #fff; padding-right: 20px; }
.tray svg { width: 24px; height: 24px; }
.tray button svg { width: 38px; height: 38px; }
.lang { width: 22px; margin-left: 14px; font-size: 16px; }
.tray time { font-size: 17px; line-height: 28px; text-align: center; margin: 0 20px 0 18px; }

.watermark { position: absolute; left: 845px; bottom: 18px; display: flex; flex-direction: column; align-items: center; width: 230px; color: #a3a3a3; opacity: .5; pointer-events: none; font: bold 38px "Liberation Sans", sans-serif; line-height: 48px; }
.watermark span:first-child { font-family: "DejaVu Sans", sans-serif; font-size: 66px; line-height: 58px; }
```
